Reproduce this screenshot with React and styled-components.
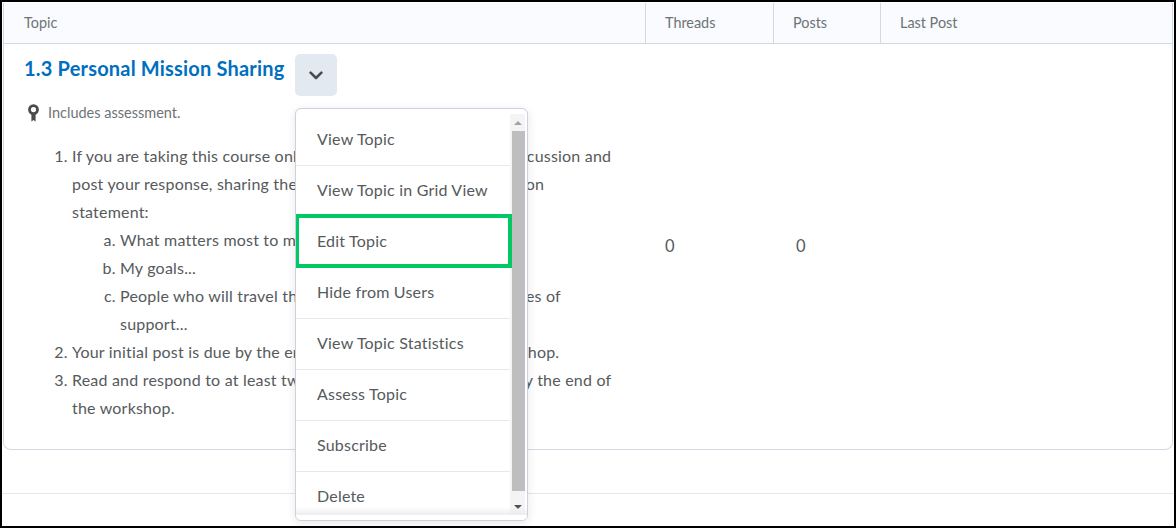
import React from 'react';
import styled, { createGlobalStyle } from 'styled-components';

const GlobalStyle = createGlobalStyle`
  html, body {
    margin: 0;
    padding: 0;
    background: #fff;
    font-family: Lato, "Open Sans", sans-serif;
    color: #565a5c;
  }
`;

const Frame = styled.div`
  width: 1176px;
  height: 528px;
  box-sizing: border-box;
  border: 2px solid #000;
  padding: 1px 1px 0 1px;
  overflow: hidden;
  background: #fff;
`;

const Table = styled.div`
  border: 1px solid #d3d9e3;
  border-top: none;
  border-radius: 0 0 8px 8px;
  box-sizing: border-box;
`;

const HeaderRow = styled.div`
  display: grid;
  grid-template-columns: 641px 128px 107px 1fr;
  height: 41px;
  background: #f9fbff;
  border-bottom: 1px solid #d3d9e3;
  box-sizing: border-box;
`;

const HeaderCell = styled.div`
  display: flex;
  align-items: center;
  padding: 0 0 2px ${(p) => (p.$first ? 20 : 19)}px;
  font-size: 14.4px;
  color: #6e7376;
  border-left: ${(p) => (p.$first ? 'none' : '1px solid #d3d9e3')};
`;

const BodyRow = styled.div`
  display: grid;
  grid-template-columns: 641px 128px 107px 1fr;
`;

const TopicCell = styled.div`
  padding: 10px 0 27px 20px;
`;

const TitleRow = styled.div`
  display: flex;
  align-items: flex-start;
  gap: 11px;
`;

const Title = styled.a`
  font-size: 20px;
  font-weight: 700;
  line-height: 28px;
  letter-spacing: 0.19px;
  color: #006fbf;
`;

const MoreButton = styled.div`
  width: 42px;
  height: 42px;
  border-radius: 5px;
  background: #e3e9f1;
  display: flex;
  align-items: center;
  justify-content: center;
`;

const Note = styled.div`
  display: flex;
  align-items: center;
  gap: 9px;
  margin: 7px 0 0 4px;
  font-size: 14.5px;
  line-height: 20px;
  color: #6e7376;
`;

const Steps = styled.ol`
  margin: 19px 0 0;
  padding: 0 0 0 48px;
  width: 545px;
  font-size: 16px;
  line-height: 28px;
  letter-spacing: 0.2px;
`;

const SubSteps = styled.ol`
  margin: 0;
  padding-left: 48px;
  list-style-type: lower-alpha;
`;

const CountCell = styled.div`
  display: flex;
  align-items: center;
  padding: 0 0 2px ${(p) => p.$left}px;
  font-size: 16.5px;
`;

const Footer = styled.div`
  margin: 43px -1px 0;
  border-top: 1px solid #e3e7ed;
`;

const Menu = styled.div`
  position: absolute;
  left: 295px;
  top: 108px;
  width: 233px;
  height: 413px;
  box-sizing: border-box;
  background: #fff;
  border: 1px solid #c9d2de;
  border-radius: 6px;
  box-shadow: 0 2px 10px rgba(0, 0, 0, 0.1);
  display: flex;
  padding-top: 6px;
  overflow: hidden;
`;

const MenuList = styled.div`
  width: 214px;
  flex: none;
`;

const MenuItem = styled.div`
  height: 51px;
  box-sizing: border-box;
  display: flex;
  align-items: center;
  padding: 0 0 4px 21px;
  font-size: 16px;
  letter-spacing: 0.2px;
  color: #565a5c;
  border-bottom: 1px solid #e3e9f1;
  &:last-child {
    border-bottom: none;
  }
`;

const SelectedItem = styled(MenuItem)`
  border: 4px solid #00c864;
  padding: 0 0 2px 18px;
  height: 54px;
  margin: -3px -2px 0 -1px;
  position: relative;
`;

const BottomFade = styled.div`
  position: absolute;
  left: 0;
  right: 0;
  bottom: 5px;
  height: 8px;
  background: linear-gradient(rgba(235, 235, 235, 0), rgba(235, 235, 235, 0.9));
`;

const BottomStrip = styled.div`
  position: absolute;
  left: 0;
  right: 0;
  bottom: 0;
  height: 5px;
  background: #fff;
`;

const Scrollbar = styled.div`
  width: 15px;
  flex: none;
  margin: -1px 0 5px;
  background: #f4f4f4;
  display: flex;
  flex-direction: column;
`;

const Arrow = styled.div`
  height: 17px;
  flex: none;
  display: flex;
  align-items: center;
  justify-content: center;
`;

const ArrowUp = styled.span`
  width: 0;
  height: 0;
  border: 4px solid transparent;
  border-top: none;
  border-bottom: 4px solid #a3a3a3;
`;

const ArrowDown = styled.span`
  width: 0;
  height: 0;
  border: 4px solid transparent;
  border-bottom: none;
  border-top: 4px solid #505050;
`;

const Thumb = styled.div`
  flex: 1;
  background: #bebebe;
  margin: 0 0 7px 2px;
`;

function Ribbon() {
  return (
    <svg width="11" height="18" viewBox="0 0 11 18">
      <path d="M3.4 9.5V17.6L5.5 16L7.6 17.6V9.5Z" fill="#494c4e" />
      <circle cx="5.5" cy="5.6" r="4" fill="none" stroke="#494c4e" strokeWidth="2.8" />
    </svg>
  );
}

function Chevron() {
  return (
    <svg width="14" height="9" viewBox="0 0 14 9">
      <path d="M1.6 1.6L7 7L12.4 1.6" fill="none" stroke="#494c4e" strokeWidth="2.6" strokeLinecap="round" strokeLinejoin="round" />
    </svg>
  );
}

const items = [
  'View Topic',
  'View Topic in Grid View',
  'Edit Topic',
  'Hide from Users',
  'View Topic Statistics',
  'Assess Topic',
  'Subscribe',
  'Delete',
];

export default function App() {
  return (
    <Frame>
      <GlobalStyle />
      <Table>
        <HeaderRow>
          <HeaderCell $first>Topic</HeaderCell>
          <HeaderCell>Threads</HeaderCell>
          <HeaderCell>Posts</HeaderCell>
          <HeaderCell>Last Post</HeaderCell>
        </HeaderRow>
        <BodyRow>
          <TopicCell>
            <TitleRow>
              <Title>1.3 Personal Mission Sharing</Title>
              <MoreButton>
                <Chevron />
              </MoreButton>
            </TitleRow>
            <Note>
              <Ribbon />
              Includes assessment.
            </Note>
            <Steps>
              <li>
                If you are taking this course online, please go to this Weekly discussion and post
                your response, sharing the following items from your mission statement:
                <SubSteps>
                  <li>What matters most to me...</li>
                  <li>My goals...</li>
                  <li>People who will travel the journey with me and my sources of support...</li>
                </SubSteps>
              </li>
              <li>Your initial post is due by the end of the first week of the workshop.</li>
              <li>Read and respond to at least two of your colleagues' postings by the end of the workshop.</li>
            </Steps>
          </TopicCell>
          <CountCell $left={20}>0</CountCell>
          <CountCell $left={23}>0</CountCell>
          <CountCell />
        </BodyRow>
      </Table>
      <Footer />
      <Menu>
        <MenuList>
          {items.map((item) =>
            item === 'Edit Topic' ? (
              <SelectedItem key={item}>{item}</SelectedItem>
            ) : (
              <MenuItem key={item}>{item}</MenuItem>
            )
          )}
        </MenuList>
        <Scrollbar>
          <Arrow>
            <ArrowUp />
          </Arrow>
          <Thumb />
          <Arrow>
            <ArrowDown />
          </Arrow>
        </Scrollbar>
        <BottomFade />
        <BottomStrip />
      </Menu>
    </Frame>
  );
}
